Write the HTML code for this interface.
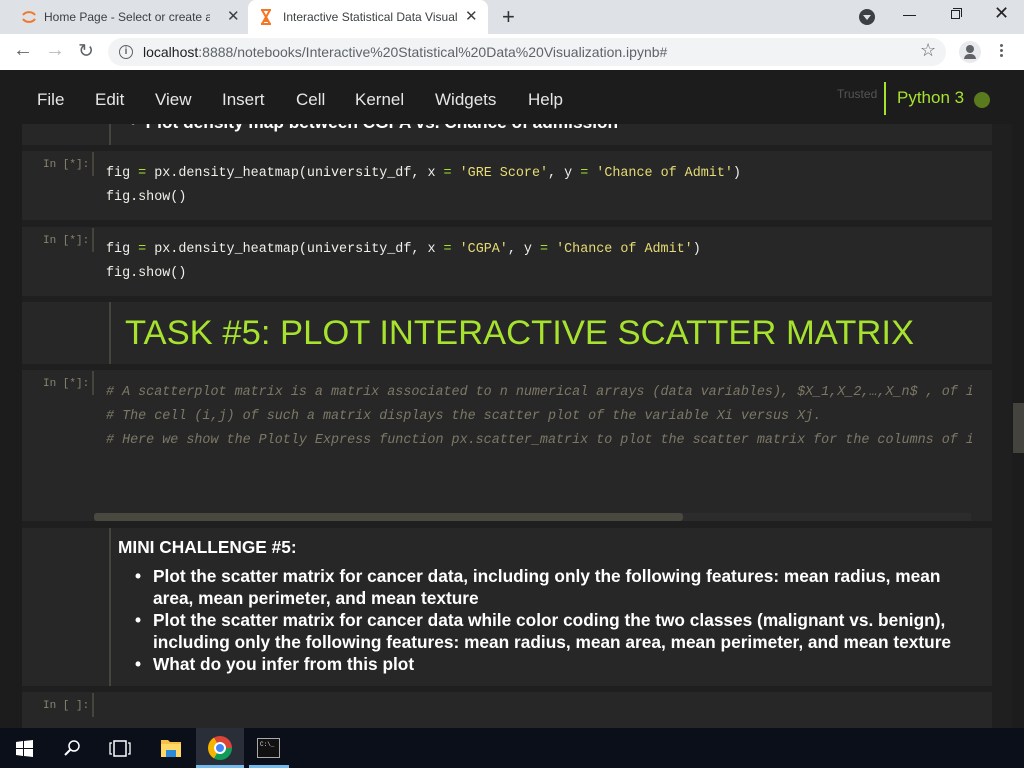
<!DOCTYPE html>
<html><head><meta charset="utf-8"><style>
*{margin:0;padding:0;box-sizing:border-box}
body{width:1024px;height:768px;overflow:hidden;background:#1f1f1f;font-family:"Liberation Sans",sans-serif;position:relative}
.abs{position:absolute}
.tabbar{left:0;top:0;width:1024px;height:34px;background:#dee1e6}
.tab{top:0;height:34px;font-size:12px;color:#3c4043;line-height:34px}
.toolbar{left:0;top:34px;width:1024px;height:36px;background:#fff}
.omni{left:108px;top:38px;width:838px;height:28px;background:#f1f3f4;border-radius:14px}
.menu{top:90px;font-size:17px;color:#e6e6e6}
.side{left:0;top:124px;width:22px;height:604px;background:#1c1c1c}
.cell{left:22px;width:970px;background:#272727}
.prompt{font-family:"Liberation Mono",monospace;font-size:11px;color:#8a8370;left:43px}
.vl{width:2px;background:#45443d}
.code{font-family:"Liberation Mono",monospace;font-size:13.4px;color:#f0f0ea;left:106px;white-space:pre}
.g{color:#a6e22e}.y{color:#e6db74}
.cm{font-family:"Liberation Mono",monospace;font-size:13.4px;color:#7d7866;font-style:italic;left:106px;white-space:pre;width:866px;overflow:hidden}
.md{color:#fff;font-weight:bold;font-size:17.3px}
.taskbar{left:0;top:728px;width:1024px;height:40px;background:#0b0f1a}
</style></head><body>
<div class="abs tabbar"></div>
<div class="abs" style="left:248px;top:0;width:240px;height:34px;background:#fff;border-radius:8px 8px 0 0"></div>
<svg class="abs" style="left:20px;top:9px" width="18" height="16"><path d="M3 6 A7 6 0 0 1 15 6 M3 10 A7 6 0 0 0 15 10" stroke="#f37726" stroke-width="2" fill="none"/></svg>
<div class="abs tab" style="left:44px;width:166px;overflow:hidden;white-space:nowrap">Home Page - Select or create a n</div>
<div class="abs tab" style="left:227px;font-size:15px">✕</div>
<svg class="abs" style="left:259px;top:8px" width="14" height="18"><path d="M2 2H12M2 16H12M3 2L11 16M11 2L3 16" stroke="#f37726" stroke-width="2" fill="none"/><path d="M4 14L7 10L10 14Z" fill="#f37726"/></svg>
<div class="abs tab" style="left:283px;width:174px;overflow:hidden;white-space:nowrap">Interactive Statistical Data Visuali</div>
<div class="abs tab" style="left:465px;font-size:15px">✕</div>
<div class="abs tab" style="left:502px;font-size:22px;color:#333">+</div>
<div class="abs" style="left:859px;top:9px;width:16px;height:16px;border-radius:8px;background:#3c4043"></div>
<div class="abs" style="left:863px;top:15px;width:0;height:0;border-left:4px solid transparent;border-right:4px solid transparent;border-top:5px solid #dee1e6"></div>
<div class="abs" style="left:903px;top:15px;width:13px;height:1px;background:#222"></div>
<div class="abs" style="left:951px;top:10px;width:9px;height:9px;border:1px solid #222;background:#dee1e6"></div>
<div class="abs" style="left:953px;top:8px;width:9px;height:9px;border-top:1px solid #222;border-right:1px solid #222"></div>
<div class="abs" style="left:994px;top:3px;font-size:18px;color:#222">✕</div>
<div class="abs toolbar"></div>
<div class="abs" style="left:13px;top:39px;font-size:20px;color:#5f6368">←</div>
<div class="abs" style="left:45px;top:39px;font-size:20px;color:#bbb">→</div>
<div class="abs" style="left:78px;top:40px;font-size:19px;color:#5f6368">↻</div>
<div class="abs omni"></div>
<div class="abs" style="left:119px;top:45px;width:14px;height:14px;border:1.5px solid #5f6368;border-radius:7px;font-size:10px;line-height:11px;text-align:center;color:#5f6368;font-weight:bold">i</div>
<div class="abs" style="left:143px;top:44px;font-size:14px;color:#202124">localhost<span style="color:#5f6368">:8888/notebooks/Interactive%20Statistical%20Data%20Visualization.ipynb#</span></div>
<div class="abs" style="left:920px;top:40px;font-size:18px;color:#5f6368">☆</div>
<div class="abs" style="left:959px;top:41px;width:22px;height:22px;border-radius:11px;background:#e8eaed"></div>
<div class="abs" style="left:966px;top:45px;width:8px;height:8px;border-radius:4px;background:#5f6368"></div>
<div class="abs" style="left:964px;top:54px;width:12px;height:5px;border-radius:5px 5px 0 0;background:#5f6368"></div>
<div class="abs" style="left:1000px;top:44px;width:3px;height:3px;background:#5f6368;border-radius:2px;box-shadow:0 5px 0 #5f6368,0 10px 0 #5f6368"></div>
<div class="abs side"></div>
<div class="abs" style="left:1012px;top:124px;width:12px;height:604px;background:#1c1c1c"></div>
<div class="abs" style="left:1013px;top:403px;width:11px;height:50px;background:#44433e"></div>
<!-- cell 0 partial -->
<div class="abs cell" style="top:124px;height:21px"></div>
<div class="abs vl" style="left:109px;top:124px;height:21px"></div>
<div class="abs md" style="left:130px;top:112px">•&nbsp; Plot density map between CGPA vs. Chance of admission</div>
<div class="abs" style="left:0;top:70px;width:1024px;height:54px;background:#1c1c1c"></div>
<div class="abs menu" style="left:37px">File</div>
<div class="abs menu" style="left:95px">Edit</div>
<div class="abs menu" style="left:155px">View</div>
<div class="abs menu" style="left:222px">Insert</div>
<div class="abs menu" style="left:296px">Cell</div>
<div class="abs menu" style="left:355px">Kernel</div>
<div class="abs menu" style="left:435px">Widgets</div>
<div class="abs menu" style="left:528px">Help</div>
<div class="abs" style="left:837px;top:87px;font-size:12px;color:#555">Trusted</div>
<div class="abs" style="left:884px;top:82px;width:2px;height:33px;background:#a6e22e"></div>
<div class="abs" style="left:897px;top:88px;font-size:17px;color:#a6e22e">Python 3</div>
<div class="abs" style="left:974px;top:92px;width:16px;height:16px;border-radius:8px;background:#5a7a1e"></div>
<!-- cell 1 -->
<div class="abs cell" style="top:151px;height:69px"></div>
<div class="abs prompt" style="top:159px">In [*]:</div>
<div class="abs vl" style="left:92px;top:152px;height:24px"></div>
<div class="abs code" style="top:166px">fig <span class="g">=</span> px.density_heatmap(university_df, x <span class="g">=</span> <span class="y">'GRE Score'</span>, y <span class="g">=</span> <span class="y">'Chance of Admit'</span>)</div>
<div class="abs code" style="top:190px">fig.show()</div>
<!-- cell 2 -->
<div class="abs cell" style="top:227px;height:69px"></div>
<div class="abs prompt" style="top:235px">In [*]:</div>
<div class="abs vl" style="left:92px;top:228px;height:24px"></div>
<div class="abs code" style="top:242px">fig <span class="g">=</span> px.density_heatmap(university_df, x <span class="g">=</span> <span class="y">'CGPA'</span>, y <span class="g">=</span> <span class="y">'Chance of Admit'</span>)</div>
<div class="abs code" style="top:266px">fig.show()</div>
<!-- cell 3 heading -->
<div class="abs cell" style="top:302px;height:62px"></div>
<div class="abs vl" style="left:109px;top:302px;height:62px"></div>
<div class="abs" style="left:125px;top:314px;font-size:34.6px;color:#a6e22e;white-space:nowrap">TASK #5: PLOT INTERACTIVE SCATTER MATRIX</div>
<!-- cell 4 -->
<div class="abs cell" style="top:370px;height:151px"></div>
<div class="abs prompt" style="top:378px">In [*]:</div>
<div class="abs vl" style="left:92px;top:371px;height:24px"></div>
<div class="abs cm" style="top:385px"># A scatterplot matrix is a matrix associated to n numerical arrays (data variables), $X_1,X_2,…,X_n$ , of i</div>
<div class="abs cm" style="top:409px"># The cell (i,j) of such a matrix displays the scatter plot of the variable Xi versus Xj.</div>
<div class="abs cm" style="top:433px"># Here we show the Plotly Express function px.scatter_matrix to plot the scatter matrix for the columns of i</div>
<div class="abs" style="left:94px;top:513px;width:877px;height:8px;background:#2c2c2c"></div>
<div class="abs" style="left:94px;top:513px;width:589px;height:8px;background:#4a4940;border-radius:3px"></div>
<!-- cell 5 -->
<div class="abs cell" style="top:528px;height:158px"></div>
<div class="abs vl" style="left:109px;top:528px;height:158px"></div>
<div class="abs md" style="left:118px;top:537px">MINI CHALLENGE #5:</div>
<div class="abs md" style="left:135px;top:565px;line-height:22px;width:830px">
<div style="position:relative;padding-left:18px"><span style="position:absolute;left:0">•</span>Plot the scatter matrix for cancer data, including only the following features: mean radius, mean area, mean perimeter, and mean texture</div>
<div style="position:relative;padding-left:18px"><span style="position:absolute;left:0">•</span>Plot the scatter matrix for cancer data while color coding the two classes (malignant vs. benign), including only the following features: mean radius, mean area, mean perimeter, and mean texture</div>
<div style="position:relative;padding-left:18px"><span style="position:absolute;left:0">•</span>What do you infer from this plot</div>
</div>
<!-- cell 6 -->
<div class="abs cell" style="top:692px;height:36px"></div>
<div class="abs prompt" style="top:700px">In [ ]:</div>
<div class="abs vl" style="left:92px;top:693px;height:24px"></div>
<!-- taskbar -->
<div class="abs taskbar"></div>
<svg class="abs" style="left:16px;top:740px" width="17" height="17"><path d="M0 2L7 1V8H0ZM8 1L17 0V8H8ZM0 9H7V16L0 15ZM8 9H17V17L8 16Z" fill="#fff"/></svg>
<svg class="abs" style="left:63px;top:739px" width="18" height="18"><circle cx="11" cy="7" r="5" stroke="#fff" stroke-width="1.5" fill="none"/><path d="M7.5 10.5L2 16" stroke="#fff" stroke-width="2"/></svg>
<svg class="abs" style="left:109px;top:740px" width="22" height="17"><rect x="5" y="1" width="12" height="15" stroke="#fff" stroke-width="1.5" fill="none"/><path d="M3 3H1V14H3M19 3H21V14H19" stroke="#fff" stroke-width="1.3" fill="none"/></svg>
<svg class="abs" style="left:160px;top:738px" width="22" height="20"><path d="M1 2H8L10 4H21V19H1Z" fill="#f6c146"/><rect x="1" y="6" width="20" height="13" fill="#ffd867"/><rect x="6" y="12" width="10" height="7" fill="#2b8ad8"/></svg>
<div class="abs" style="left:196px;top:728px;width:48px;height:40px;background:#2a2e38"></div>
<div class="abs" style="left:196px;top:765px;width:48px;height:3px;background:#76b9ed"></div>
<div class="abs" style="left:208px;top:736px;width:24px;height:24px;border-radius:12px;background:conic-gradient(from -30deg,#db4437 0 120deg,#0f9d58 120deg 240deg,#f4b400 240deg 360deg)"></div>
<div class="abs" style="left:214px;top:742px;width:12px;height:12px;border-radius:6px;background:#4285f4;border:2px solid #fff"></div>
<div class="abs" style="left:249px;top:765px;width:40px;height:3px;background:#76b9ed"></div>
<div class="abs" style="left:257px;top:738px;width:23px;height:20px;background:#111;border:1px solid #aaa"></div>
<div class="abs" style="left:260px;top:741px;font-family:'Liberation Mono',monospace;font-size:6px;color:#ddd">C:\_</div>
</body></html>
